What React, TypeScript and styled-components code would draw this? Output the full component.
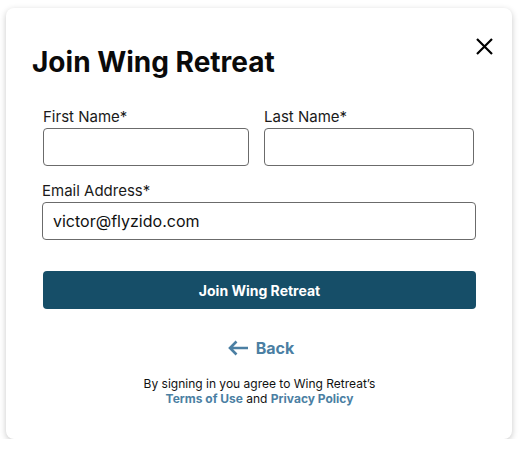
import React from "react";
import styled, { createGlobalStyle } from "styled-components";

const Global = createGlobalStyle`
  html, body { margin: 0; padding: 0; background: #ffffff; }
  body { font-family: Inter, "Noto Sans", sans-serif; color: #111; }
  * { box-sizing: border-box; }
`;

const Page = styled.div`
  padding: 8px 10px 0 6px;
`;

const Card = styled.div`
  width: 506px;
  height: 431px;
  background: #fff;
  border-radius: 8px;
  box-shadow: 0 2px 6px rgba(0, 0, 0, 0.22);
  display: flex;
  flex-direction: column;
`;

const Header = styled.div`
  display: flex;
  justify-content: space-between;
  align-items: flex-start;
  padding: 30px 19px 0 26px;
`;

const Title = styled.h1`
  margin: 8px 0 0;
  font-size: 28px;
  line-height: 32px;
  font-weight: 700;
  color: #0a0a0a;
`;

const Close = styled.button`
  border: 0;
  background: none;
  padding: 0;
  width: 17px;
  height: 17px;
  display: flex;
  cursor: pointer;
`;

const Form = styled.div`
  display: flex;
  flex-direction: column;
  padding: 0 36px 0 37px;
  margin-top: 30px;
`;

const Row = styled.div`
  display: grid;
  grid-template-columns: 206px 210px;
  column-gap: 15px;
`;

const Field = styled.label`
  display: flex;
  flex-direction: column;
  gap: 2px;
`;

const Label = styled.span`
  font-size: 15px;
  line-height: 18px;
  color: #1a1a1a;
`;

const Input = styled.input`
  height: 38px;
  width: 100%;
  border: 1px solid #6b6b6b;
  border-radius: 4px;
  padding: 0 10px;
  font-family: Inter, sans-serif;
  font-size: 16px;
  color: #111;
  background: #fff;
  outline: none;
`;

const EmailBlock = styled.div`
  margin-top: 16px;
  margin-left: -1px;
`;

const Submit = styled.button`
  margin-top: 31px;
  height: 38px;
  width: 100%;
  border: 0;
  border-radius: 4px;
  background: #164e68;
  color: #fff;
  font-family: Inter, sans-serif;
  font-size: 14px;
  font-weight: 700;
`;

const Back = styled.a`
  margin-top: 29px;
  margin-left: 3px;
  align-self: center;
  display: flex;
  align-items: center;
  gap: 7px;
  font-size: 16px;
  font-weight: 700;
  color: #4b7fa3;
  text-decoration: none;
`;

const Footer = styled.p`
  margin: 18px 0 0;
  text-align: center;
  font-size: 12px;
  line-height: 15px;
  color: #111;
`;

const Link = styled.a`
  color: #4b7fa3;
  font-weight: 700;
  text-decoration: none;
`;

export default function App() {
  return (
    <>
      <Global />
      <Page>
        <Card>
          <Header>
            <Title>Join Wing Retreat</Title>
            <Close aria-label="Close">
              <svg width="17" height="17" viewBox="0 0 17 17">
                <path d="M1 1 L16 16 M16 1 L1 16" stroke="#000" strokeWidth="2.2" fill="none" />
              </svg>
            </Close>
          </Header>
          <Form>
            <Row>
              <Field>
                <Label>First Name*</Label>
                <Input />
              </Field>
              <Field>
                <Label>Last Name*</Label>
                <Input />
              </Field>
            </Row>
            <EmailBlock>
              <Field>
                <Label>Email Address*</Label>
                <Input defaultValue="victor@flyzido.com" />
              </Field>
            </EmailBlock>
            <Submit>Join Wing Retreat</Submit>
            <Back href="#">
              <svg width="21" height="16" viewBox="0 0 21 16">
                <path d="M20 8 H2 M8.5 1.5 L2 8 L8.5 14.5" stroke="#4b7fa3" strokeWidth="2.6" fill="none" />
              </svg>
              Back
            </Back>
            <Footer>
              By signing in you agree to Wing Retreat’s
              <br />
              <Link href="#">Terms of Use</Link> and <Link href="#">Privacy Policy</Link>
            </Footer>
          </Form>
        </Card>
      </Page>
    </>
  );
}
